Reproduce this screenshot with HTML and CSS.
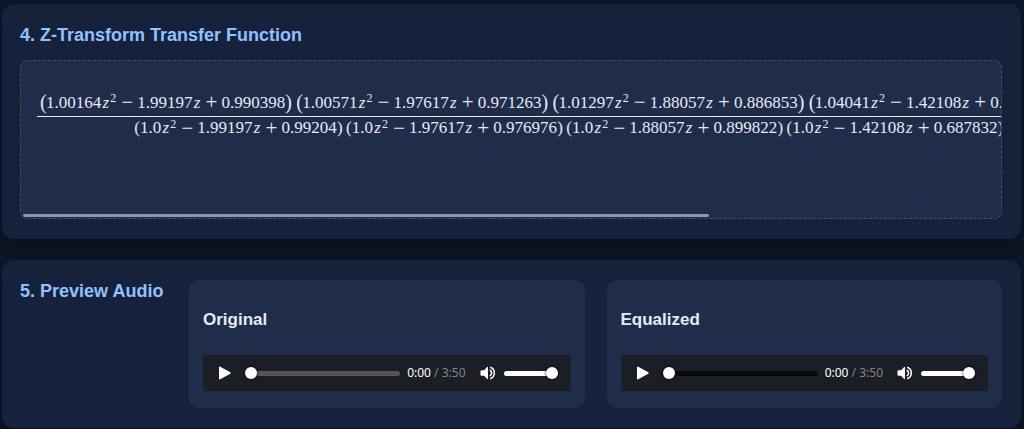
FILE: index.html
```html
<!DOCTYPE html>
<html lang="en">
<head>
<meta charset="utf-8">
<title>Equalizer</title>
<link rel="stylesheet" href="styles.css">
</head>
<body>
<main class="page">
  <section class="card">
    <h2 class="card-title">4. Z-Transform Transfer Function</h2>
    <div class="formula-box">
      <div class="formula-view">
        <div class="fraction">
          <div class="row numerator">
            <span class="factor"><span class="paren">(</span>1.00164<i>z</i><sup>2</sup><b>−</b>1.99197<i>z</i><b>+</b>0.990398<span class="paren">)</span></span>
            <span class="factor"><span class="paren">(</span>1.00571<i>z</i><sup>2</sup><b>−</b>1.97617<i>z</i><b>+</b>0.971263<span class="paren">)</span></span>
            <span class="factor"><span class="paren">(</span>1.01297<i>z</i><sup>2</sup><b>−</b>1.88057<i>z</i><b>+</b>0.886853<span class="paren">)</span></span>
            <span class="factor"><span class="paren">(</span>1.04041<i>z</i><sup>2</sup><b>−</b>1.42108<i>z</i><b>+</b>0.647422<span class="paren">)</span></span>
          </div>
          <div class="row denominator">
            <span class="factor"><span class="paren">(</span>1.0<i>z</i><sup>2</sup><b>−</b>1.99197<i>z</i><b>+</b>0.99204<span class="paren">)</span></span>
            <span class="factor"><span class="paren">(</span>1.0<i>z</i><sup>2</sup><b>−</b>1.97617<i>z</i><b>+</b>0.976976<span class="paren">)</span></span>
            <span class="factor"><span class="paren">(</span>1.0<i>z</i><sup>2</sup><b>−</b>1.88057<i>z</i><b>+</b>0.899822<span class="paren">)</span></span>
            <span class="factor"><span class="paren">(</span>1.0<i>z</i><sup>2</sup><b>−</b>1.42108<i>z</i><b>+</b>0.687832<span class="paren">)</span></span>
          </div>
        </div>
      </div>
      <div class="scroll-thumb"></div>
    </div>
  </section>

  <section class="card preview">
    <h2 class="card-title">5. Preview Audio</h2>
    <div class="panel">
      <h3 class="panel-title">Original</h3>
      <div class="player">
        <button class="icon-button" aria-label="Play"><svg width="14" height="14" viewBox="0 0 14 14"><path d="M1 1.500Q1 .2 2.200 .7L12.300 6.200Q13.200 7 12.300 7.800L2.200 13.300Q1 13.800 1 12.500Z"/></svg></button>
        <input class="range seek buffered" type="range" min="0" max="230" value="0" aria-label="Seek original">
        <span class="time"><span class="now">0:00</span> / 3:50</span>
        <button class="icon-button" aria-label="Mute"><svg width="16" height="14" viewBox="0 0 16 14"><path d="M1.500 4.200H4L7.200 1Q8 .3 8 1.400V12.600Q8 13.700 7.200 13L4 9.800H1.500Q.5 9.800 .5 8.800V5.200Q.5 4.200 1.500 4.200Z"/><path class="wave" d="M9.700 4Q11.600 4.800 11.600 7T9.700 10M10.200 1.300Q14.300 2.600 14.300 7T10.200 12.700"/></svg></button>
        <input class="range volume" type="range" min="0" max="100" value="100" aria-label="Volume original">
      </div>
    </div>
    <div class="panel">
      <h3 class="panel-title">Equalized</h3>
      <div class="player">
        <button class="icon-button" aria-label="Play"><svg width="14" height="14" viewBox="0 0 14 14"><path d="M1 1.500Q1 .2 2.200 .7L12.300 6.200Q13.200 7 12.300 7.800L2.200 13.300Q1 13.800 1 12.500Z"/></svg></button>
        <input class="range seek" type="range" min="0" max="230" value="0" aria-label="Seek equalized">
        <span class="time"><span class="now">0:00</span> / 3:50</span>
        <button class="icon-button" aria-label="Mute"><svg width="16" height="14" viewBox="0 0 16 14"><path d="M1.500 4.200H4L7.200 1Q8 .3 8 1.400V12.600Q8 13.700 7.200 13L4 9.800H1.500Q.5 9.800 .5 8.800V5.200Q.5 4.200 1.500 4.200Z"/><path class="wave" d="M9.700 4Q11.600 4.800 11.600 7T9.700 10M10.200 1.300Q14.300 2.600 14.300 7T10.200 12.700"/></svg></button>
        <input class="range volume" type="range" min="0" max="100" value="100" aria-label="Volume equalized">
      </div>
    </div>
  </section>
</main>
</body>
</html>
```
FILE: styles.css
```css
* { box-sizing: border-box; }

body {
  margin: 0;
  background: #0f172a;
  color: #e5eaf5;
  font-family: "Liberation Sans", Arial, sans-serif;
}

.page {
  display: flex;
  flex-direction: column;
  gap: 21px;
  padding: 4px 3px 1px 2px;
}

.card {
  padding: 20px 19px 20px 18px;
  border-radius: 12px;
  background: #16213b;
  box-shadow: 0 8px 24px rgba(0, 0, 0, 0.45);
}

.card-title {
  margin: 0;
  color: #90c2ff;
  font-size: 18px;
  line-height: 22px;
  white-space: nowrap;
}

.formula-box {
  position: relative;
  margin-top: 14px;
  padding: 30px 0 79px 16px;
  border: 1px dashed #425069;
  border-radius: 8px;
  background: #202d4a;
}

.formula-view { overflow: hidden; }

.fraction {
  width: max-content;
  font-family: "Liberation Serif", serif;
  font-size: 17px;
}

.row {
  display: flex;
  white-space: nowrap;
}

.numerator {
  gap: 5px;
  padding: 0 0 2px 3px;
  line-height: 23px;
  border-bottom: 1px solid #e5eaf5;
}

.denominator {
  gap: 3px;
  padding-left: 97px;
  line-height: 22px;
}

.factor {
  display: flex;
}

.factor i {
  width: 9px;
  text-align: center;
}

.factor sup {
  font-size: 12px;
  line-height: 14px;
  width: 7px;
}

.factor b {
  width: 20px;
  font-size: 21px;
  font-weight: normal;
  text-align: center;
}

.paren {
  width: 6px;
  text-align: center;
}

.numerator .paren { font-size: 20px; }

.scroll-thumb {
  position: absolute;
  left: 2px;
  bottom: 1px;
  width: 70%;
  height: 3px;
  border-radius: 2px;
  background: #9196a5;
}

.preview {
  display: grid;
  grid-template-columns: 147px 1fr 1fr;
  align-items: start;
  gap: 22px;
}

.panel {
  min-width: 0;
  padding: 29px 14px 17px;
  border-radius: 10px;
  background: #202d4a;
}

.panel-title {
  margin: 0 0 25px;
  font-size: 17px;
  line-height: 21px;
}

.player {
  display: flex;
  align-items: center;
  height: 36px;
  padding: 0 13px 0 15px;
  background: #1b1e24;
}

.icon-button {
  display: flex;
  flex: none;
  margin: 0;
  padding: 0;
  border: 0;
  background: none;
}

.icon-button svg {
  fill: #fff;
}

.icon-button .wave {
  fill: none;
  stroke: #fff;
  stroke-width: 1.5;
}

.range {
  appearance: none;
  height: 5px;
  margin: 0;
  border-radius: 3px;
  background: var(--track);
}

.range::-webkit-slider-thumb {
  appearance: none;
  width: 12px;
  height: 12px;
  border-radius: 50%;
  background: #fff;
  box-shadow: 0 0 3px #000;
}

.seek {
  --track: #08090c;
  flex: 1;
  min-width: 0;
  margin: 0 7px 0 13px;
}

.buffered { --track: #56565a; }

.volume {
  --track: #fff;
  width: 54px;
  margin-left: 8px;
}

.time {
  margin-right: 14px;
  color: #84868a;
  font: 12px/18px "Noto Sans", sans-serif;
  white-space: nowrap;
}

.now { color: #fff; }
```
